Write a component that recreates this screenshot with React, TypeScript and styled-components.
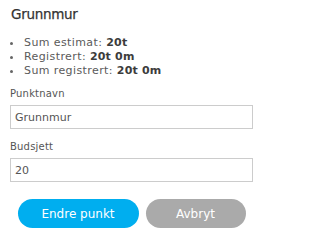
import styled, { createGlobalStyle } from 'styled-components';

const GlobalStyle = createGlobalStyle`
  html, body {
    margin: 0;
    padding: 0;
    background: #ffffff;
  }
  body {
    font-family: 'DejaVu Sans', 'Liberation Sans', sans-serif;
    color: #333333;
  }
`;

const Panel = styled.div`
  width: 274px;
  padding: 5px 21px 0 10px;
  box-sizing: border-box;
`;

const Title = styled.h3`
  margin: 0 0 0 1px;
  font-size: 13.5px;
  font-weight: normal;
  line-height: 18px;
  letter-spacing: -0.3px;
  color: #333333;
  -webkit-text-stroke: 0.25px #333333;
`;

const StatList = styled.ul`
  margin: 13px 0 0 0;
  padding: 0 0 0 14px;
  font-size: 11px;
  line-height: 14px;
  letter-spacing: 0.4px;
  color: #5a5a5a;
  list-style: none;
`;

const StatItem = styled.li`
  position: relative;
  &::before {
    content: '';
    position: absolute;
    left: -14.5px;
    top: 5.5px;
    width: 3.5px;
    height: 3.5px;
    border-radius: 50%;
    background: #666666;
  }
`;

const Strong = styled.span`
  font-weight: bold;
  letter-spacing: 0.2px;
  color: #3c3c3c;
`;

const Field = styled.div<{ $top: number }>`
  display: flex;
  flex-direction: column;
  gap: 5px;
  margin-top: ${(p) => p.$top}px;
`;

const FieldLabel = styled.label`
  font-size: 10px;
  line-height: 13px;
  letter-spacing: 0.2px;
  color: #555555;
`;

const TextInput = styled.input`
  box-sizing: border-box;
  width: 100%;
  height: 24px;
  padding: 0 4px;
  border: 1px solid #cccccc;
  border-radius: 0;
  font-family: 'DejaVu Sans', 'Liberation Sans', sans-serif;
  font-size: 11px;
  color: #555555;
  outline: none;
`;

const Actions = styled.div`
  display: flex;
  justify-content: center;
  gap: 7px;
  margin-top: 17px;
`;

const Button = styled.button<{ $variant: 'primary' | 'muted' }>`
  height: 29px;
  width: ${(p) => (p.$variant === 'primary' ? 121 : 100)}px;
  padding: 0;
  border: none;
  border-radius: 15px;
  background: ${(p) => (p.$variant === 'primary' ? '#00aeef' : '#aaaaaa')};
  color: #ffffff;
  font-family: 'DejaVu Sans', 'Liberation Sans', sans-serif;
  font-size: 12px;
  cursor: pointer;
`;

export default function App() {
  return (
    <>
      <GlobalStyle />
      <Panel>
        <Title>Grunnmur</Title>
        <StatList>
          <StatItem>
            Sum estimat: <Strong>20t</Strong>
          </StatItem>
          <StatItem>
            Registrert: <Strong>20t 0m</Strong>
          </StatItem>
          <StatItem>
            Sum registrert: <Strong>20t 0m</Strong>
          </StatItem>
        </StatList>
        <Field $top={9}>
          <FieldLabel htmlFor="punktnavn">Punktnavn</FieldLabel>
          <TextInput id="punktnavn" defaultValue="Grunnmur" />
        </Field>
        <Field $top={11}>
          <FieldLabel htmlFor="budsjett">Budsjett</FieldLabel>
          <TextInput id="budsjett" defaultValue="20" />
        </Field>
        <Actions>
          <Button $variant="primary">Endre punkt</Button>
          <Button $variant="muted">Avbryt</Button>
        </Actions>
      </Panel>
    </>
  );
}
